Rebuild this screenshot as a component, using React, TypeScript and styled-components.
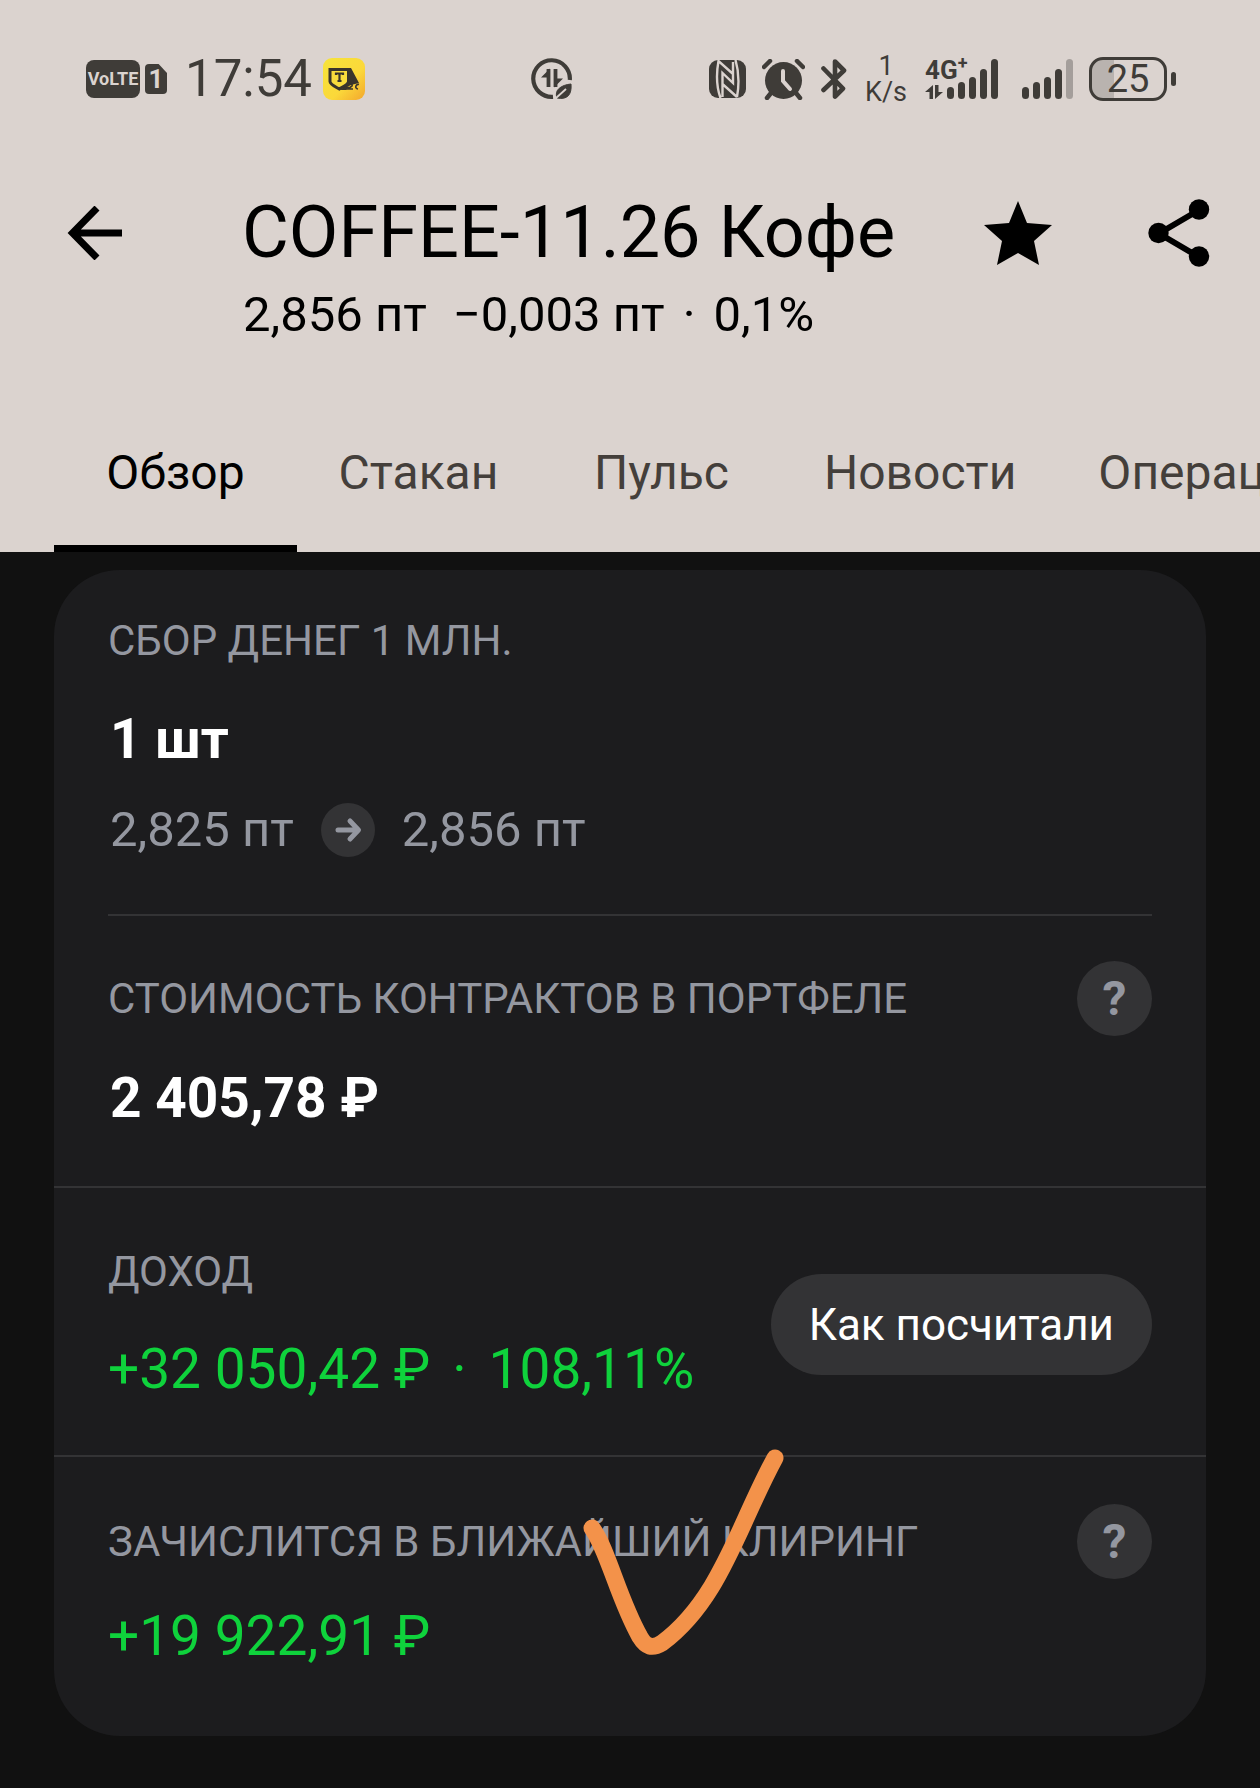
import React from "react";
import styled, { createGlobalStyle } from "styled-components";

const color = {
  header: "#dbd3cf",
  ink: "#000000",
  inkSoft: "#443f3b",
  status: "#3f3c38",
  page: "#111111",
  card: "#1c1c1e",
  line: "#333335",
  chip: "#333335",
  muted: "#9497a0",
  green: "#0fd23c",
  orange: "#f3924a",
};

const GlobalStyle = createGlobalStyle`
  * { box-sizing: border-box; }
  body {
    margin: 0;
    background: ${color.page};
    font-family: Roboto, "Noto Sans", sans-serif;
  }
  button { font: inherit; border: 0; padding: 0; background: none; cursor: pointer; }
  h1, h2, p { margin: 0; font-weight: 400; }
`;

const Header = styled.header`
  background: ${color.header};
  color: ${color.ink};
  padding-top: 50px;
`;

/* ---------- status bar ---------- */

const StatusBar = styled.div`
  display: flex;
  align-items: center;
  height: 58px;
  padding: 0 84px 0 86px;
  color: ${color.status};
  white-space: nowrap;
`;

const VolteBadge = styled.span`
  width: 54px;
  height: 38px;
  border-radius: 8px;
  background: ${color.status};
  color: ${color.header};
  font-size: 18px;
  font-weight: 700;
  line-height: 38px;
  text-align: center;
`;

const SimBadge = styled.span`
  width: 22px;
  height: 30px;
  margin-left: 5px;
  border-radius: 4px;
  background: ${color.status};
  color: ${color.header};
  clip-path: polygon(0 0, 62% 0, 100% 30%, 100% 100%, 0 100%);
  font-size: 26px;
  font-weight: 700;
  line-height: 30px;
  text-align: center;
`;

const Clock = styled.time`
  margin: 0 11px 0 18px;
  font-size: 51px;
  line-height: 60px;
`;

const CarrierSlot = styled.span`
  display: flex;
  margin-left: 166px;
`;

const StatusGroup = styled.div`
  display: flex;
  align-items: center;
  margin-left: auto;
`;

const Slot = styled.span<{ $gap: number }>`
  display: flex;
  margin-left: ${(p) => p.$gap}px;
`;

const Speed = styled.span`
  display: flex;
  flex-direction: column;
  align-items: center;
  width: 42px;
  margin-left: 18px;
  font-size: 27px;
  line-height: 26px;
`;

const Battery = styled.span`
  display: flex;
  align-items: center;
  justify-content: center;
  width: 78px;
  height: 44px;
  margin-left: 16px;
  border: 3px solid ${color.status};
  border-radius: 14px;
  background: linear-gradient(90deg, #b9b3af 30%, transparent 30%);
  font-size: 38px;
  line-height: 38px;
`;

const BatteryCap = styled.span`
  width: 5px;
  height: 14px;
  margin-left: 4px;
  border-radius: 3px;
  background: ${color.status};
`;

/* ---------- app bar ---------- */

const AppBar = styled.div`
  display: flex;
  align-items: flex-start;
  padding: 83px 50px 49px 67px;
`;

const IconButton = styled.button`
  display: flex;
  align-items: center;
  height: 84px;
  color: inherit;
`;

const Titles = styled.div`
  flex: 1;
  min-width: 0;
  padding-left: 120px;
  white-space: nowrap;
`;

const Title = styled.h1`
  font-size: 72px;
  line-height: 84px;
`;

const Quote = styled.p`
  display: flex;
  gap: 26px;
  margin-top: 10px;
  padding-left: 1px;
  font-size: 49px;
  line-height: 60px;
`;

const Change = styled.span`
  display: flex;
  gap: 18px;
`;

const Actions = styled.div`
  display: flex;
  gap: 96px;
`;

const Tabs = styled.nav`
  display: flex;
  padding-left: 54px;
  overflow: hidden;
`;

const Tab = styled.button<{ $active: boolean }>`
  flex: none;
  min-width: 243px;
  height: 158px;
  padding: 0 41px;
  color: ${(p) => (p.$active ? color.ink : color.inkSoft)};
  box-shadow: ${(p) => (p.$active ? `inset 0 -7px ${color.ink}` : "none")};
  font-size: 48px;
  line-height: 60px;
`;

/* ---------- position card ---------- */

const Main = styled.main`
  padding: 18px 54px 52px;
`;

const Card = styled.article`
  position: relative;
  border-radius: 66px;
  background: ${color.card};
  color: #ffffff;
`;

const Section = styled.section<{ $top: number; $bottom: number }>`
  padding: ${(p) => p.$top}px 54px ${(p) => p.$bottom}px;
`;

const Divider = styled.hr<{ $inset?: boolean }>`
  height: 2px;
  margin: 0 ${(p) => (p.$inset ? 54 : 0)}px;
  border: 0;
  background: ${color.line};
`;

const Row = styled.div`
  display: flex;
  align-items: center;
  justify-content: space-between;
`;

const Label = styled.h2`
  color: ${color.muted};
  font-size: 42px;
  line-height: 48px;
  white-space: nowrap;
`;

const Value = styled.p<{ $gap: number }>`
  margin-top: ${(p) => p.$gap}px;
  padding-left: 2px;
  font-size: 55px;
  font-weight: 700;
  line-height: 64px;
  white-space: nowrap;
`;

const Gain = styled(Value)`
  display: flex;
  gap: 22px;
  padding-left: 0;
  color: ${color.green};
  font-weight: 400;
`;

const PriceMove = styled.div`
  display: flex;
  align-items: center;
  gap: 27px;
  margin-top: 32px;
  padding-left: 2px;
  color: ${color.muted};
  font-size: 49px;
  line-height: 54px;
`;

const HelpButton = styled.button`
  width: 75px;
  height: 75px;
  border-radius: 50%;
  background: ${color.chip};
  color: ${color.muted};
  font-size: 48px;
  font-weight: 700;
  line-height: 75px;
`;

const PillButton = styled.button`
  height: 101px;
  padding: 0 38px;
  border-radius: 51px;
  background: ${color.chip};
  color: #ffffff;
  font-size: 44px;
  line-height: 60px;
`;

const Ink = styled.svg`
  position: absolute;
  left: 520px;
  bottom: 70px;
  pointer-events: none;
`;

/* ---------- drawings ---------- */

const AppIcon = () => (
  <svg width="42" height="42" viewBox="0 0 42 42" aria-hidden="true">
    <defs>
      <linearGradient id="sun" x1="0" y1="0" x2="1" y2="1">
        <stop offset="0" stopColor="#f6e43a" />
        <stop offset="0.6" stopColor="#fbd83a" />
        <stop offset="1" stopColor="#f3a62c" />
      </linearGradient>
    </defs>
    <rect width="42" height="42" rx="9" fill="url(#sun)" />
    <path d="M25 10h3l8 15-8 2-8 4z" fill="#3a352c" />
    <path d="M7 11.500h18.500v12c0 3-6 5.500-9.200 7.500C13 29 7 26.500 7 23.500z" fill="#f9dc3c" stroke="#3a352c" strokeWidth="3" />
    <path d="M17 32l6-4 4 1-4 3z" fill="#3a352c" />
    <path d="M13 17v-1.500h7V17M16.500 16v7M14.500 23h4" fill="none" stroke="#3a352c" strokeWidth="2.200" />
    <path d="M25 27c2-2 5-1 4 1l-4 3h5M36 26.500c-3-1-5 4-1 4.500" fill="none" stroke="#3a352c" strokeWidth="1.600" />
  </svg>
);

const DataSaverIcon = () => (
  <svg width="42" height="42" viewBox="0 0 42 42" fill="none" stroke="currentColor" aria-hidden="true">
    <path d="M22 38.800A18.300 18.300 0 1 1 38.800 22" strokeWidth="4.200" />
    <path d="M17.500 29V11M24.500 11v18" strokeWidth="3.800" />
    <path d="M19 10.500v9h-9zM23 29.500v-9h9z" fill="currentColor" stroke="none" />
    <path d="M40 26c1 11-4 16-14 14-3-8 4-13 14-14z" fill="currentColor" />
    <path d="M25 40l10-9" stroke={color.header} strokeWidth="1.800" />
  </svg>
);

const NfcIcon = () => (
  <svg width="38" height="38" viewBox="0 0 38 38" aria-hidden="true">
    <rect width="37" height="38" rx="9" fill="currentColor" />
    <path
      d="M11.500 38C7.500 27 7.500 12 9.500 1L24 14V2M28 37L13.500 24V37M13.500 24V13L24 23V14M26.500 0C30 12 30 26 28 37"
      fill="none"
      stroke={color.header}
      strokeWidth="2.400"
    />
  </svg>
);

const AlarmIcon = () => (
  <svg width="43" height="41" viewBox="0 0 43 41" aria-hidden="true">
    <circle cx="21.500" cy="21.500" r="18.500" fill="currentColor" />
    <path
      d="M2 8l6-6M41 8l-6-6M9 34l-4 5M34 34l4 5"
      stroke="currentColor"
      strokeWidth="4.500"
      strokeLinecap="round"
    />
    <path d="M21 12v10l7 8" fill="none" stroke={color.header} strokeWidth="4" strokeLinecap="round" />
  </svg>
);

const BluetoothIcon = () => (
  <svg width="26" height="42" viewBox="0 0 26 42" fill="none" stroke="currentColor" aria-hidden="true">
    <path
      d="M2.500 10.500L22 30.500l-8 8V3.500l9 9L2.500 32"
      strokeWidth="4.600"
      strokeLinecap="round"
      strokeLinejoin="round"
    />
  </svg>
);

const barTops = [29, 24, 19, 11, 1];

const SignalBars = ({ faded }: { faded?: boolean }) => (
  <svg width="51" height="42" viewBox="0 0 51 42" aria-hidden="true">
    {barTops.map((top, i) => (
      <rect
        key={top}
        x={i * 11}
        y={top}
        width="7"
        height={41 - top}
        rx="3.500"
        fill="currentColor"
        opacity={faded && i === 4 ? 0.35 : 1}
      />
    ))}
  </svg>
);

const Network = styled.span`
  display: flex;
  flex-direction: column;
  height: 42px;
  width: 22px;
  margin-left: 18px;
  font-size: 26px;
  font-weight: 700;
  line-height: 24px;

  svg {
    margin-top: 3px;
  }
`;

const Plus = styled.sup`
  font-size: 18px;
  line-height: 8px;
`;

const TrafficIcon = () => (
  <svg width="18" height="14" viewBox="0 0 18 14" fill="currentColor" aria-hidden="true">
    <path d="M4.500 14V7H0L8 0v14zM10 0v14l8-7h-4.500V0z" />
  </svg>
);

const BackIcon = () => (
  <svg width="55" height="54" viewBox="0 0 55 54" fill="none" stroke="currentColor" strokeWidth="7" aria-hidden="true">
    <path d="M30 2L5.500 27 30 52M6 27h49" />
  </svg>
);

const StarIcon = () => (
  <svg width="68" height="66" viewBox="0 0 68 66" aria-hidden="true">
    <path d="M34 1l9 22 25 2-18 16 5 24-21-12-21 12 5-24L0 25l25-2z" fill="currentColor" />
  </svg>
);

const ShareIcon = () => (
  <svg width="62" height="68" viewBox="0 0 62 68" fill="currentColor" aria-hidden="true">
    <path d="M51 11L11 34.500 51 58" fill="none" stroke="currentColor" strokeWidth="6" />
    <circle cx="51" cy="10.500" r="10.200" />
    <circle cx="10.500" cy="34" r="10.200" />
    <circle cx="51" cy="57.500" r="10.200" />
  </svg>
);

const MoveIcon = () => (
  <svg width="54" height="54" viewBox="0 0 54 54" aria-hidden="true">
    <circle cx="27" cy="27" r="27" fill={color.chip} />
    <path
      d="M17 27h20M29 18l8.500 9-8.500 9"
      fill="none"
      stroke="currentColor"
      strokeWidth="5"
      strokeLinecap="round"
      strokeLinejoin="round"
    />
  </svg>
);

const CheckMark = () => (
  <Ink width="220" height="228" viewBox="0 0 220 228" aria-hidden="true">
    <path
      d="M18 90C34 112 44 160 66 199C72 209 78 211 88 205C146 162 164 88 201 20"
      fill="none"
      stroke={color.orange}
      strokeWidth="17"
      strokeLinecap="round"
      strokeLinejoin="round"
    />
  </Ink>
);

const tabs = ["Обзор", "Стакан", "Пульс", "Новости", "Операции"];

export default function App() {
  return (
    <>
      <GlobalStyle />
      <Header>
        <StatusBar>
          <VolteBadge>VoLTE</VolteBadge>
          <SimBadge>1</SimBadge>
          <Clock>17:54</Clock>
          <AppIcon />
          <CarrierSlot>
            <DataSaverIcon />
          </CarrierSlot>
          <StatusGroup>
            <NfcIcon />
            <Slot $gap={15}>
              <AlarmIcon />
            </Slot>
            <Slot $gap={16}>
              <BluetoothIcon />
            </Slot>
            <Speed>
              <span>1</span>
              <span>K/s</span>
            </Speed>
            <Network>
              <span>
                4G<Plus>+</Plus>
              </span>
              <TrafficIcon />
            </Network>
            <SignalBars />
            <Slot $gap={24}>
              <SignalBars faded />
            </Slot>
            <Battery>25</Battery>
            <BatteryCap />
          </StatusGroup>
        </StatusBar>

        <AppBar>
          <IconButton aria-label="Назад">
            <BackIcon />
          </IconButton>
          <Titles>
            <Title>COFFEE-11.26 Кофе</Title>
            <Quote>
              <span>2,856 пт</span>
              <Change>
                <span>−0,003 пт</span>
                <span>·</span>
                <span>0,1%</span>
              </Change>
            </Quote>
          </Titles>
          <Actions>
            <IconButton aria-label="В избранное">
              <StarIcon />
            </IconButton>
            <IconButton aria-label="Поделиться">
              <ShareIcon />
            </IconButton>
          </Actions>
        </AppBar>

        <Tabs>
          {tabs.map((name, i) => (
            <Tab key={name} $active={i === 0}>
              {name}
            </Tab>
          ))}
        </Tabs>
      </Header>

      <Main>
        <Card>
          <Section $top={47} $bottom={57}>
            <Label>СБОР ДЕНЕГ 1 МЛН.</Label>
            <Value $gap={42}>1 шт</Value>
            <PriceMove>
              <span>2,825 пт</span>
              <MoveIcon />
              <span>2,856 пт</span>
            </PriceMove>
          </Section>
          <Divider $inset />
          <Section $top={45} $bottom={56}>
            <Row>
              <Label>СТОИМОСТЬ КОНТРАКТОВ В ПОРТФЕЛЕ</Label>
              <HelpButton aria-label="Что такое стоимость контрактов">?</HelpButton>
            </Row>
            <Value $gap={30}>2 405,78 ₽</Value>
          </Section>
          <Divider />
          <Section $top={60} $bottom={54}>
            <Row>
              <div>
                <Label>ДОХОД</Label>
                <Gain $gap={41}>
                  <span>+32 050,42 ₽</span>
                  <span>·</span>
                  <span>108,11%</span>
                </Gain>
              </div>
              <PillButton>Как посчитали</PillButton>
            </Row>
          </Section>
          <Divider />
          <Section $top={47} $bottom={68}>
            <Row>
              <Label>ЗАЧИСЛИТСЯ В БЛИЖАЙШИЙ КЛИРИНГ</Label>
              <HelpButton aria-label="Что такое клиринг">?</HelpButton>
            </Row>
            <Gain $gap={25}>+19 922,91 ₽</Gain>
          </Section>
          <CheckMark />
        </Card>
      </Main>
    </>
  );
}
